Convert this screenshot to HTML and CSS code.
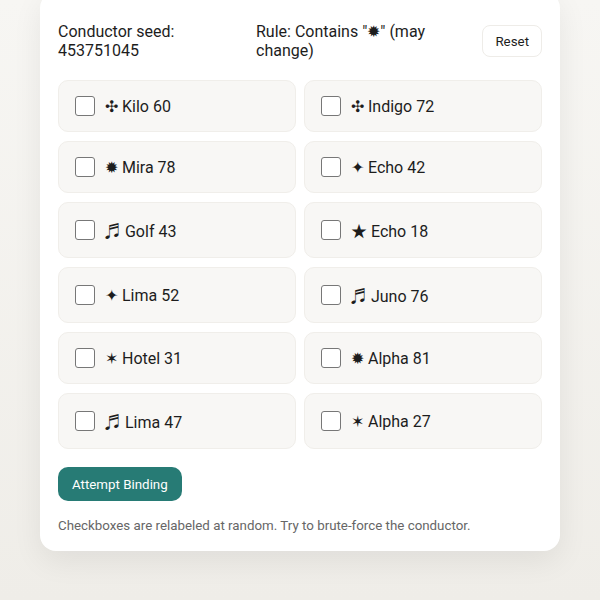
FILE: index.html
```html
<!DOCTYPE html>
<html lang="en">
<head>
  <meta charset="UTF-8" />
  <meta name="viewport" content="width=device-width, initial-scale=1.0"/>
  <title>Conductor</title>
  <link rel="stylesheet" href="styles.css">
</head>
<body>
  <div class="panel">

    <!-- Cabeçalho -->
    <div class="top">
      <div class="seed">Conductor seed: 453751045</div>
      <div class="rule">Rule: Contains "✹" (may change)</div>
      <button class="reset" onclick="resetar()">Reset</button>
    </div>

    <!-- Caixas -->
    <div class="boxes" id="boxes">
      <label class="box"><input type="checkbox" /><span>✣ Kilo 60</span></label>
      <label class="box"><input type="checkbox" /><span>✣ Indigo 72</span></label>
      <label class="box"><input type="checkbox" /><span>✹ Mira 78</span></label>
      <label class="box"><input type="checkbox" /><span>✦ Echo 42</span></label>
      <label class="box"><input type="checkbox" /><span>♬ Golf 43</span></label>
      <label class="box"><input type="checkbox" /><span>★ Echo 18</span></label>
      <label class="box"><input type="checkbox" /><span>✦ Lima 52</span></label>
      <label class="box"><input type="checkbox" /><span>♬ Juno 76</span></label>
      <label class="box"><input type="checkbox" /><span>✶ Hotel 31</span></label>
      <label class="box"><input type="checkbox" /><span>✹ Alpha 81</span></label>
      <label class="box"><input type="checkbox" /><span>♬ Lima 47</span></label>
      <label class="box"><input type="checkbox" /><span>✶ Alpha 27</span></label>
    </div>

    <button class="btn" onclick="tentar()">Attempt Binding</button>
    <p class="note">Checkboxes are relabeled at random. Try to brute-force the conductor.</p>

  </div>

  <script>
    function resetar() {
      document.querySelectorAll('#boxes input').forEach(c => c.checked = false);
    }

    function tentar() {
      const marcadas = document.querySelectorAll('#boxes input:checked');
      alert(marcadas.length + ' selected');
    }
  </script>
</body>
</html>
```

FILE: styles.css
```css
body {
  margin: 0;
  font-family: Roboto, "Noto Sans CJK JP", sans-serif;
  background: linear-gradient(#f7f6f3, #efede8);
  color: #1d1d1d;
  min-height: 600px;
}

.panel {
  width: 484px;
  margin: -8px auto 0;
  background: white;
  border-radius: 16px;
  box-shadow: 0 10px 30px rgba(0,0,0,0.07);
  padding: 30px 18px 18px;
}

.top {
  display: flex;
  align-items: center;
  gap: 16px;
  font-size: 16px;
  line-height: 1.2;
  margin-bottom: 20px;
}

.seed {
  width: 182px;
}

.rule {
  flex: 1;
}

.reset {
  background: white;
  border: 1px solid #eeece8;
  border-radius: 8px;
  font-family: inherit;
  font-size: 13.33px;
  color: #1d1d1d;
  padding: 0 12px;
  height: 32px;
  cursor: pointer;
}

.boxes {
  display: grid;
  grid-template-columns: 1fr 1fr;
  gap: 9px 8px;
}

.box {
  display: flex;
  align-items: center;
  gap: 10px;
  background: #f8f7f5;
  border: 1px solid #f0eeea;
  border-radius: 10px;
  padding: 15px 16px;
  font-size: 16px;
  cursor: pointer;
}

.box input {
  appearance: none;
  width: 20px;
  height: 20px;
  margin: 0;
  border: 1.5px solid #777;
  border-radius: 3px;
  background: white;
  flex: none;
}

.box input:checked {
  background: #277b75;
  border-color: #277b75;
}

.btn {
  margin-top: 18px;
  background-color: #277b75;
  color: white;
  border: none;
  border-radius: 10px;
  font-family: inherit;
  font-size: 13.33px;
  height: 34px;
  padding: 0 14px;
  cursor: pointer;
}

.note {
  margin: 17px 0 0;
  font-size: 13.33px;
  color: #666;
}
```
